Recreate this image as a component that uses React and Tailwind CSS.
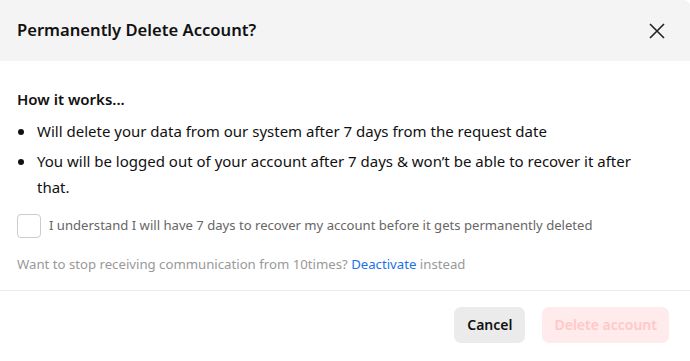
import React from "react";

export default function App() {
  return (
    <div className="w-[690px] h-[361px] bg-white overflow-hidden" style={{ fontFamily: '"Noto Sans", "Open Sans", sans-serif' }}>
      <div className="h-[61px] bg-[#f4f4f4] flex items-center justify-between pl-[17px] pr-[24px] rounded-tr-[6px]">
        <h1 className="text-[16.6px] font-semibold text-[#111]">Permanently Delete Account?</h1>
        <button className="w-[18px] h-[18px] flex items-center justify-center text-[#222]">
          <svg width="18" height="18" viewBox="0 0 18 18" fill="none" stroke="currentColor" strokeWidth="1.6">
            <path d="M2 2L16 16M16 2L2 16" />
          </svg>
        </button>
      </div>
      <div className="pl-[17px] pr-[30px] pt-[28px]">
        <div className="text-[15px] font-semibold text-[#111] leading-[20px]">How it works...</div>
        <ul className="mt-[9px] text-[15px] text-[#111] leading-[26px]">
          <li className="flex">
            <span className="w-[20px] shrink-0 flex items-start pt-[11px] pl-[1px]"><span className="w-[6px] h-[6px] rounded-full bg-[#111]" /></span>
            <span>Will delete your data from our system after 7 days from the request date</span>
          </li>
          <li className="flex mt-[4px]">
            <span className="w-[20px] shrink-0 flex items-start pt-[11px] pl-[1px]"><span className="w-[6px] h-[6px] rounded-full bg-[#111]" /></span>
            <span>You will be logged out of your account after 7 days &amp; won’t be able to recover it after that.</span>
          </li>
        </ul>
        <label className="flex items-center mt-[14px] gap-[8px]">
          <span className="w-[24px] h-[24px] border border-[#ccc] rounded-[4px] bg-white shrink-0" />
          <span className="text-[13.1px] text-[#666]">I understand I will have 7 days to recover my account before it gets permanently deleted</span>
        </label>
        <div className="mt-[17px] text-[13.2px] text-[#999]">
          Want to stop receiving communication from 10times? <span className="text-[#1a73e8]">Deactivate</span> instead
        </div>
      </div>
      <div className="mt-[15px] border-t border-[#ebebeb] flex justify-end gap-[17px] pr-[21px] pt-[16px]">
        <button className="h-[36px] px-[13px] rounded-[7px] bg-[#ebebeb] text-[14px] font-semibold text-[#111]">Cancel</button>
        <button className="h-[36px] px-[12px] rounded-[7px] bg-[#ffebeb] text-[14px] font-semibold text-[#ffc8c8]">Delete account</button>
      </div>
    </div>
  );
}
